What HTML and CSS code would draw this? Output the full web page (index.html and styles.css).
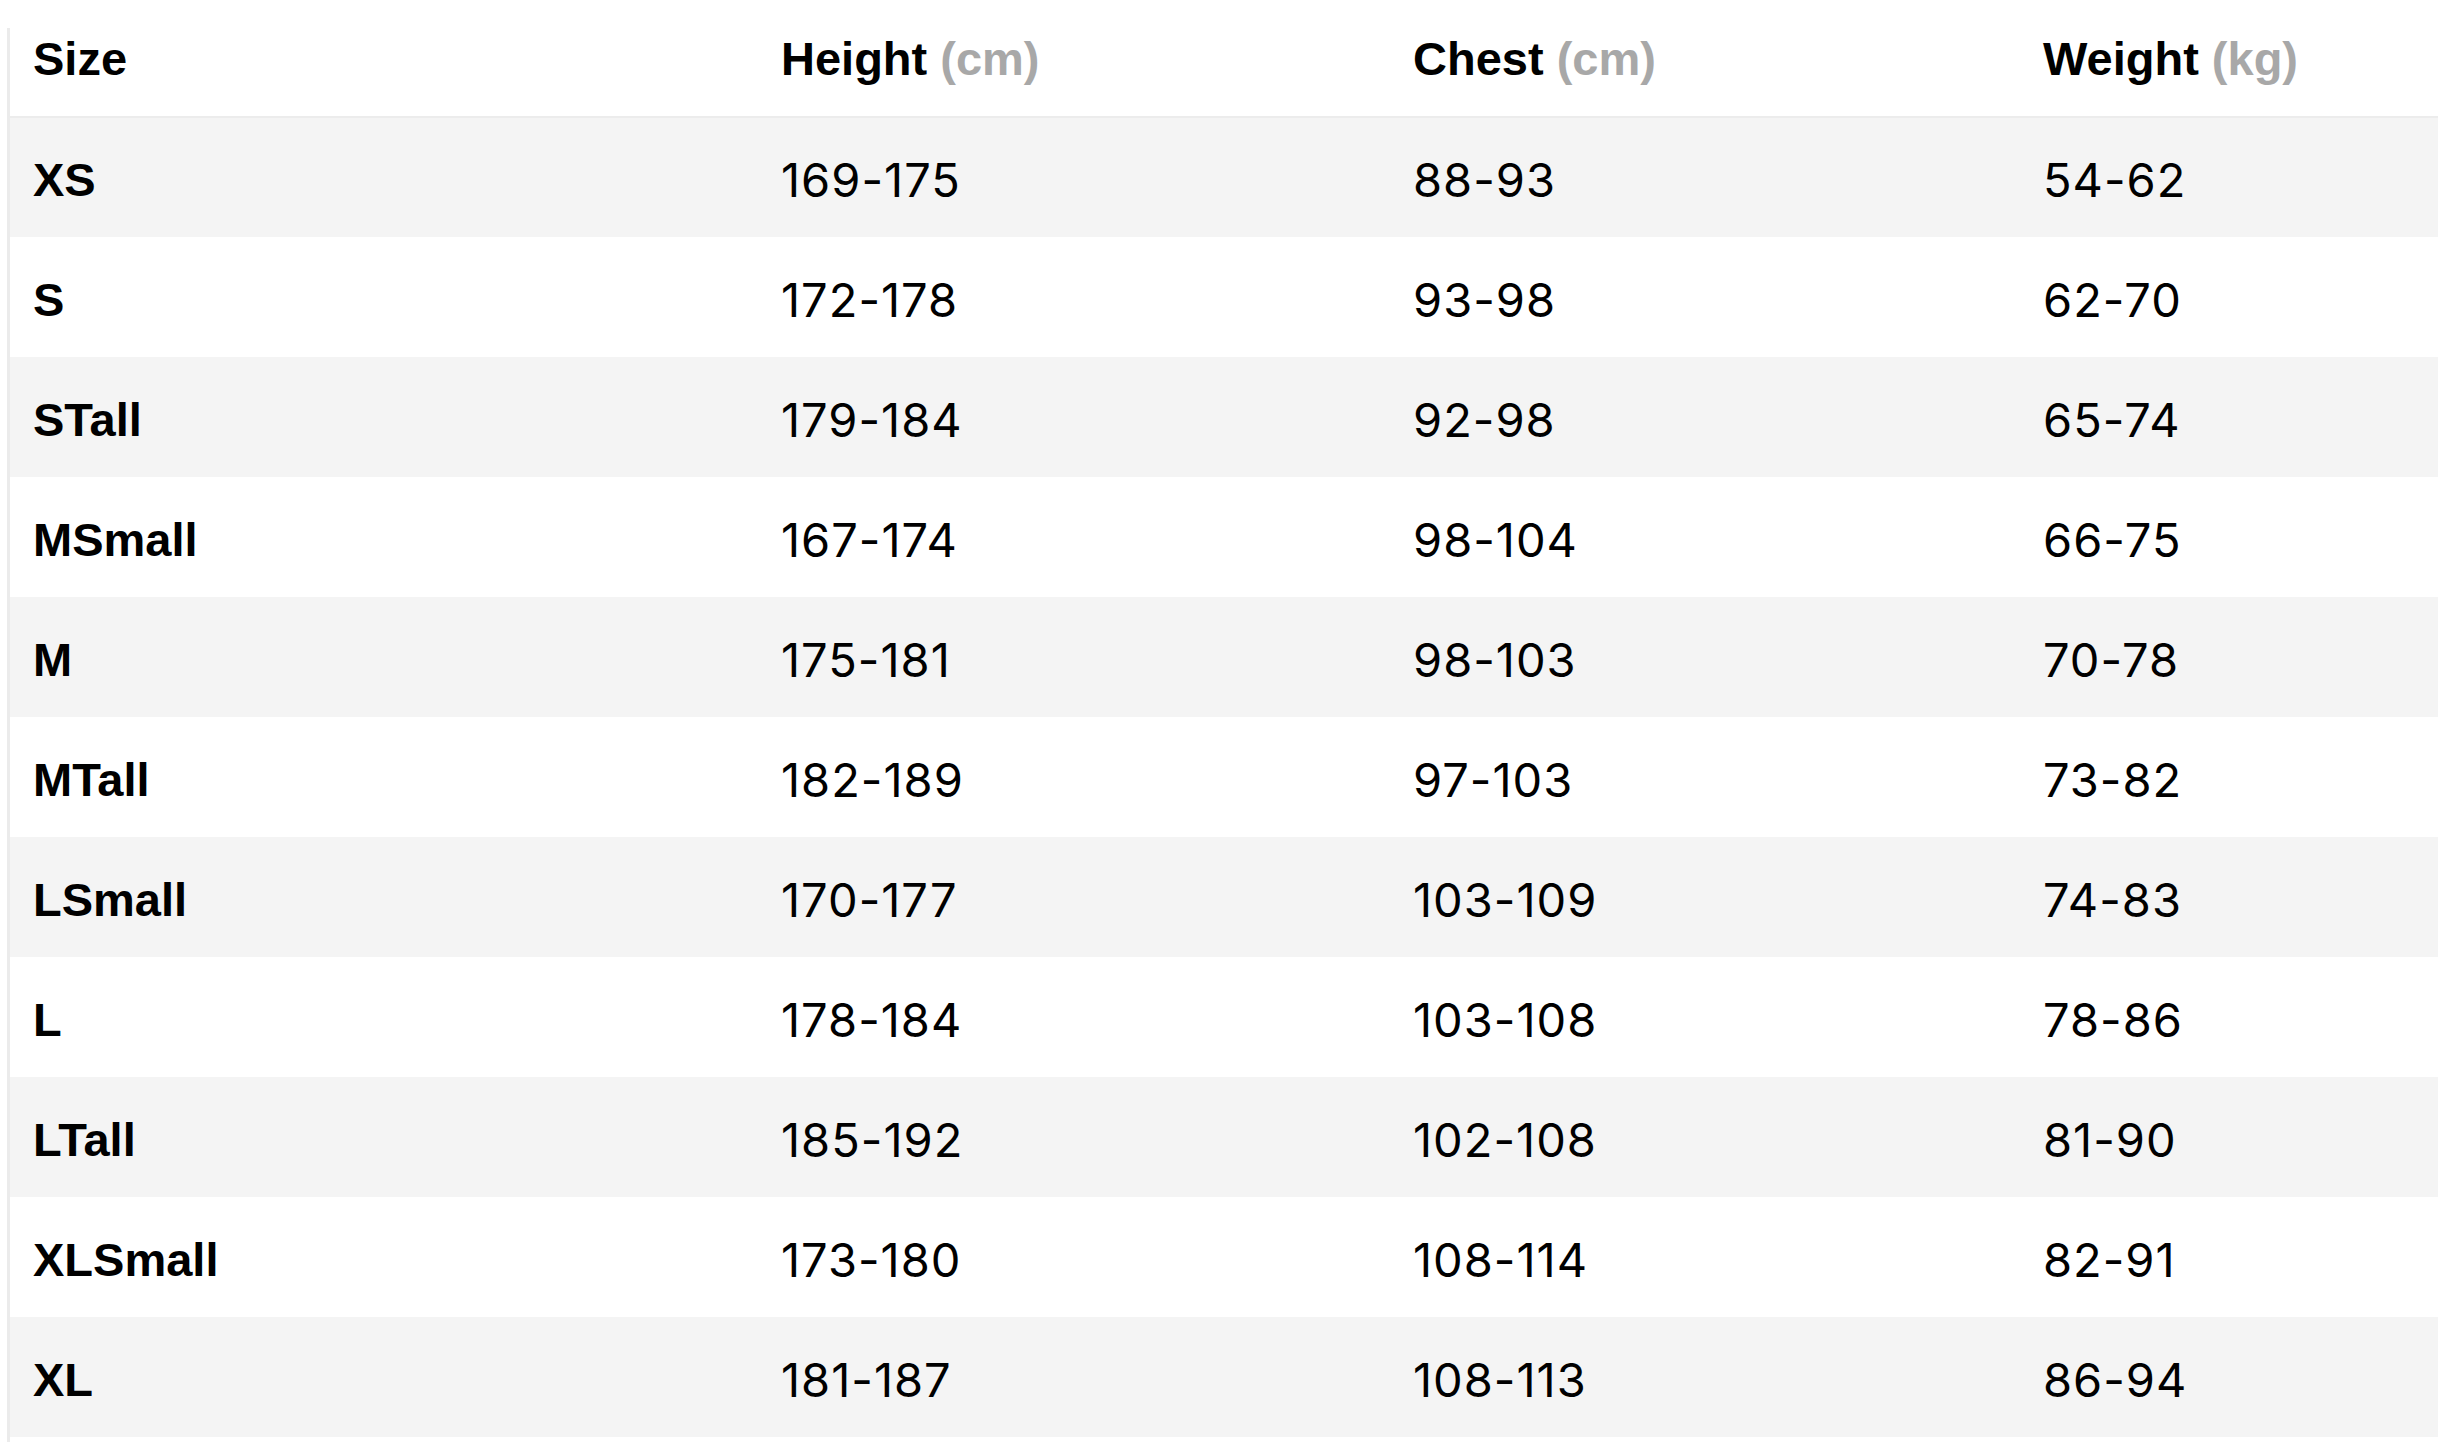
FILE: index.html
```html
<!DOCTYPE html>
<html lang="en">
<head>
<meta charset="utf-8">
<title>Size chart</title>
<link rel="stylesheet" href="styles.css">
</head>
<body>
<table class="size-table">
  <colgroup>
    <col class="c1"><col class="c2"><col class="c3"><col class="c4">
  </colgroup>
  <thead>
    <tr>
      <th>Size</th>
      <th>Height <span class="unit">(cm)</span></th>
      <th>Chest <span class="unit">(cm)</span></th>
      <th>Weight <span class="unit">(kg)</span></th>
    </tr>
  </thead>
  <tbody>
    <tr><td>XS</td><td>169-175</td><td>88-93</td><td>54-62</td></tr>
    <tr><td>S</td><td>172-178</td><td>93-98</td><td>62-70</td></tr>
    <tr><td>STall</td><td>179-184</td><td>92-98</td><td>65-74</td></tr>
    <tr><td>MSmall</td><td>167-174</td><td>98-104</td><td>66-75</td></tr>
    <tr><td>M</td><td>175-181</td><td>98-103</td><td>70-78</td></tr>
    <tr><td>MTall</td><td>182-189</td><td>97-103</td><td>73-82</td></tr>
    <tr><td>LSmall</td><td>170-177</td><td>103-109</td><td>74-83</td></tr>
    <tr><td>L</td><td>178-184</td><td>103-108</td><td>78-86</td></tr>
    <tr><td>LTall</td><td>185-192</td><td>102-108</td><td>81-90</td></tr>
    <tr><td>XLSmall</td><td>173-180</td><td>108-114</td><td>82-91</td></tr>
    <tr><td>XL</td><td>181-187</td><td>108-113</td><td>86-94</td></tr>
  </tbody>
</table>
</body>
</html>
```

FILE: styles.css
```css
html, body {
  margin: 0;
  padding: 0;
  background: #ffffff;
}
body {
  padding-left: 10px;
  font-family: "Liberation Sans", Arial, Helvetica, sans-serif;
  color: #000;
  background-image: linear-gradient(#ebebeb, #ebebeb);
  background-repeat: no-repeat;
  background-position: 7px 28px;
  background-size: 3px calc(100% - 28px);
  min-height: 100vh;
  box-sizing: border-box;
  overflow: hidden;
}
.size-table {
  border-collapse: collapse;
  table-layout: fixed;
  width: 2428px;
}
.c1 { width: 748px; }
.c2 { width: 632px; }
.c3 { width: 630px; }
.c4 { width: 418px; }
.size-table th,
.size-table td {
  text-align: left;
  vertical-align: middle;
  padding: 0 23px;
  white-space: nowrap;
}
.size-table th {
  height: 116px;
  font-size: 47px;
  font-weight: 700;
  border-bottom: 2px solid #ececec;
}
.size-table .unit {
  color: #a8a8a8;
}
.size-table td {
  height: 120px;
  font-family: Inter, "Liberation Sans", Arial, sans-serif;
  font-size: 47px;
  font-weight: 400;
  letter-spacing: 1px;
  padding-top: 4px;
  box-sizing: border-box;
}
.size-table td:first-child {
  font-family: "Liberation Sans", Arial, Helvetica, sans-serif;
  font-weight: 700;
  font-size: 47px;
  letter-spacing: 0;
}
.size-table tbody tr:nth-child(odd) td {
  background: #f4f4f4;
}
```
